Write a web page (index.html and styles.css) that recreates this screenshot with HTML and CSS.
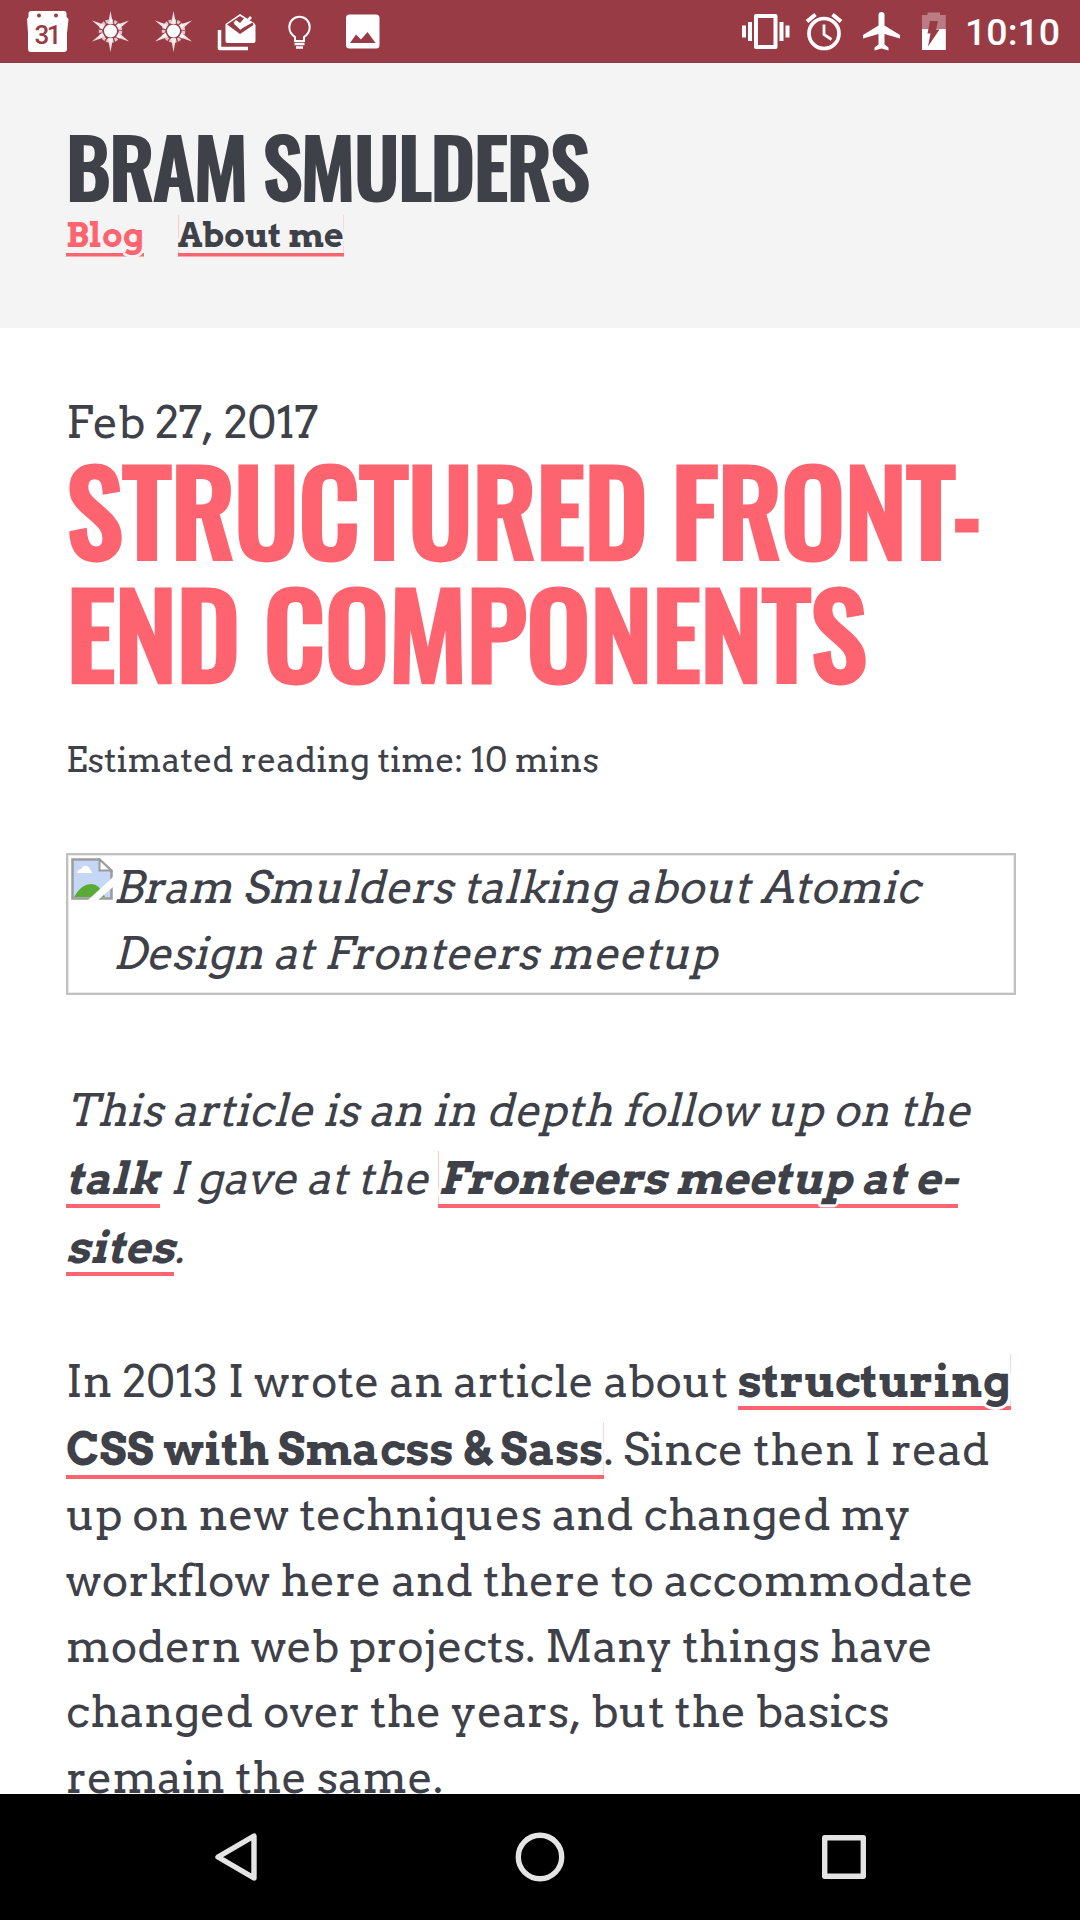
FILE: index.html
```html
<!DOCTYPE html>
<html lang="en">
<head>
<meta charset="utf-8">
<title>Structured front-end components</title>
<link rel="stylesheet" href="styles.css">
</head>
<body>
<div class="status">
  <svg class="slot" viewBox="16 0 63 63"><path fill="#fff" d="M31 11H64Q66 11 66.500 13V17L68.500 19L67 33V49Q67 52 64 52H31Q28 52 28 49V33L27 19L28.500 17V13Q29 11 31 11Z"/><circle cx="39" cy="15.500" r="2" fill="#983b45"/><circle cx="56" cy="15.500" r="2" fill="#983b45"/><text class="day" x="34.500" y="44">31</text></svg>
  <svg class="slot" viewBox="79 0 63 63"><use href="#burst"/>
    <defs><g id="burst" fill="#fff"><circle cx="110.500" cy="31" r="6.500"/><circle cx="110.500" cy="31" r="10" fill="none" stroke="#fff" stroke-width="3.500" stroke-dasharray="3 1.200" opacity=".7"/><path d="M110.500 11L113 24H108ZM110.500 52L113 38H108ZM92 20.500L105 25L102.500 29.500ZM129 20.500L116 25L118.500 29.500ZM92 41.500L105 37L102.500 32.500ZM129 41.500L116 37L118.500 32.500Z" opacity=".85"/></g></defs></svg>
  <svg class="slot" viewBox="79 0 63 63"><use href="#burst"/></svg>
  <svg class="slot" viewBox="205 0 63 63"><path fill="none" stroke="#fff" stroke-width="3.500" stroke-linejoin="round" d="M219.500 30V48.500H248"/><path fill="#fff" d="M225.500 24L240 14L254 23L255.500 25V41Q255.500 43 253.500 43H227.500Q225.500 43 225.500 41Z"/><path fill="#983b45" d="M227 24.500L240 16L244 18.500L240 23L236 20L233.500 22.500L240 29.500L252.500 22.500L253.500 25L240 34Z"/><path fill="none" stroke="#fff" stroke-width="2.600" d="M235 23L240.500 28L251 17"/></svg>
  <svg class="slot" viewBox="268 0 63 63"><g fill="none" stroke="#fff" stroke-width="2"><path d="M295 41V37Q289.300 33.500 289.300 27A10.200 10.200 0 0 1 309.700 27Q309.700 33.500 304 37V41Z"/><path d="M294.500 44H304.500" stroke-width="2.500"/><path d="M296 47.500H303" stroke-width="2.500"/></g></svg>
  <svg class="slot" viewBox="331 0 63 63"><path fill="#fff" fill-rule="evenodd" d="M349.500 14.500H376Q379.500 14.500 379.500 18V45Q379.500 48.500 376 48.500H349.500Q346 48.500 346 45V18Q346 14.500 349.500 14.500ZM350 43H375.500L367.500 32L361 39.500L356 34.500Z"/></svg>
  <div class="tray">
    <svg viewBox="737 0 57 63" width="57" height="63"><path fill="none" stroke="#fff" stroke-width="4" stroke-linejoin="round" d="M756 16H775.500V47H756Z"/><path fill="#fff" d="M742 25.500H746V37.500H742ZM748 22H752V41H748ZM779.500 22H783.500V41H779.500ZM785.500 25.500H789.500V37.500H785.500Z"/></svg>
    <svg viewBox="794 0 59 63" width="59" height="63"><g fill="none" stroke="#fff"><circle cx="824" cy="33.500" r="15" stroke-width="3.700"/><path d="M824 24.500V34.500L831.500 39.500" stroke-width="2.800"/><path d="M807 21.500L815.500 14.500M841 21.500L832.500 14.500" stroke-width="4"/></g></svg>
    <svg viewBox="853 0 57 63" width="57" height="63"><path fill="#fff" d="M900 38.500V35L884.500 25.500V15Q884.500 12 881.500 12T878.500 15V25.500L863 35V38.500L878.500 34V44.500L874.500 47.500V50.500L881.500 48.500L888.500 50.500V47.500L884.500 44.500V34Z"/></svg>
    <svg viewBox="910 0 48 63" width="48" height="63"><path fill="#bc7b82" d="M922 15H927.500V12.500H940V15H945.800V30H922Z"/><path fill="#fff" d="M922 29H945.800V50H922Z"/><path fill="#983b45" d="M930 21H938L936 29.500H939.500L928 46.500L930.500 33.500H927.500Z"/></svg>
    <span class="clock">10:10</span>
  </div>
</div>
<div class="page">
  <header class="masthead">
    <div class="logo">BRAM SMULDERS</div>
    <nav class="menu"><a class="link current">Blog</a><a class="link edge-l edge-r">About me</a></nav>
  </header>
  <main class="article">
    <p class="date">Feb 27, 2017</p>
    <h1 class="title">STRUCTURED FRONT<span class="hyphen">-</span><br>END COMPONENTS</h1>
    <p class="meta">Estimated reading time: 10 mins</p>
    <div class="broken">
      <svg class="thumb" viewBox="0 0 42 42"><path fill="#c5d7f4" stroke="#9c9c9c" stroke-width="2.500" d="M1.500 1.500H28.500L40.500 13V40.500H1.500Z"/><path fill="#fff" d="M6 15Q7 11 10.500 11Q12 7 15.500 8Q19 9 18.500 11Q21 12 21 15Z"/><path fill="#5aab35" d="M3 39Q10 26 20 26Q29 26 34 39Z"/><path fill="#fff" stroke="#9c9c9c" stroke-width="2" d="M28.500 1.500V12.500H40.500Z"/><path fill="#fff" d="M17 42L42 19V29L27 42Z"/></svg>
      <div class="alt"><div><span class="slant">Bram Smulders talking about Atomic</span></div><div><span class="slant">Design at Fronteers meetup</span></div></div>
    </div>
    <div class="copy intro">
      <div class="line"><span class="slant">This article is an in depth follow up on the</span></div>
      <div class="line linked"><a class="link"><span class="slant">talk</span></a> <span class="slant">I gave at the</span> <a class="link edge-l"><span class="slant">Fronteers meetup at e-</span></a></div>
      <div class="line linked last"><a class="link"><span class="slant">sites</span></a><span class="slant">.</span></div>
    </div>
    <div class="copy">
      <div class="line linked">In 2013 I wrote an article about <a class="link edge-r wide">structuring</a></div>
      <div class="line linked"><a class="link edge-r">CSS with Smacss &amp; Sass</a>. Since then I read</div>
      <div class="line after">up on new techniques and changed my</div>
      <div class="line">workflow here and there to accommodate</div>
      <div class="line">modern web projects. Many things have</div>
      <div class="line unkerned">changed over the years, but the basics</div>
      <div class="line">remain the same.</div>
    </div>
  </main>
</div>
<div class="navbar">
  <svg viewBox="0 0 60 60"><path d="M12 30L48 9V51Z"/></svg>
  <svg viewBox="0 0 60 60"><circle cx="30" cy="30" r="21.700"/></svg>
  <svg viewBox="0 0 60 60"><path d="M10.700 10.700H49.300V49.300H10.700Z"/></svg>
</div>
</body>
</html>
```
FILE: styles.css
```css
* { box-sizing: border-box; }
body {
  margin: 0;
  width: 1080px;
  height: 1920px;
  display: flex;
  flex-direction: column;
  overflow: hidden;
  background: #fff;
  color: #3f4149;
  font: 44.6px/65.7px Arvo, "DejaVu Serif Condensed", "DejaVu Serif", serif;
  white-space: nowrap;
}
p, h1 { margin: 0; }

.status {
  height: 63px;
  flex: none;
  display: flex;
  padding-left: 16px;
  background: #983b45;
}
.slot { width: 63px; height: 63px; }
.day { font: 500 26px Roboto, sans-serif; letter-spacing: -2.5px; fill: #983b45; }
.tray { display: flex; margin-left: auto; margin-right: 19px; }
.clock {
  width: 96px;
  margin-left: 7px;
  font: 500 37.5px/65px Roboto, sans-serif;
  color: #fff;
}

.page { flex: 1; min-height: 0; overflow: hidden; }
.masthead {
  --paper: #f4f4f4;
  height: 265px;
  padding: 62px 66px 0;
  background: var(--paper);
}
.logo {
  font: 500 80.3px/80px Oswald, "Open Sans Condensed", sans-serif;
  letter-spacing: -1.4px;
  word-spacing: -2.3px;
  -webkit-text-stroke: 1.9px;
}
.menu {
  display: flex;
  gap: 33.5px;
  margin-top: 10px;
  font-size: 34px;
}
.link {
  --rule: 4px;
  padding-bottom: 2.5px;
  font-weight: 700;
  line-height: 1;
  background:
    linear-gradient(#fd6470, #fd6470) 0 100% / 100% var(--rule) no-repeat,
    linear-gradient(var(--left, transparent), var(--left, transparent)) 0 0 / 1px 100% no-repeat,
    linear-gradient(var(--right, transparent), var(--right, transparent)) 100% 0 / 1px 100% no-repeat;
  text-shadow:
    3px 0 var(--paper), -3px 0 var(--paper), 0 3px var(--paper), 0 -3px var(--paper),
    2px 2px var(--paper), -2px 2px var(--paper), 2px -2px var(--paper), -2px -2px var(--paper);
}
.menu .link { --rule: 3.5px; line-height: 39px; }
.edge-l { --left: #fdc9ce; }
.edge-r { --right: #fdd5d9; }
.wide { letter-spacing: .15px; }
.current { color: #fd6470; }

.article { --paper: #fff; padding: 69.5px 64px 0 66px; }
.date { line-height: 48px; letter-spacing: -.2px; }
.date, .unkerned { font-kerning: none; }
.title {
  margin-top: 1px;
  font: 500 116px/123px Oswald, "Open Sans Condensed", sans-serif;
  letter-spacing: -1.4px;
  word-spacing: -3px;
  -webkit-text-stroke: 2.8px;
  color: #fd6470;
}
.hyphen {
  display: inline-block;
  margin-left: -1.5px;
  transform: scaleX(.76);
  transform-origin: 0 50%;
}
.meta { margin-top: 42.4px; font-size: 34.1px; line-height: 50px; }
.broken {
  display: flex;
  height: 142px;
  margin-top: 68px;
  border: 2px solid #c0c0c0;
  box-shadow: inset 0 0 0 1px #e9e9e9;
  line-height: 66px;
}
.thumb { width: 42px; height: 42px; margin: 3px 0 0 3px; }
.alt { margin-top: -1px; }
.slant {
  display: inline-block;
  line-height: 1;
  transform: skewX(-14deg);
  transform-origin: 0 85%;
}
.copy { margin-top: 65.6px; }
.copy.intro { margin-top: 83px; }
.linked { padding-top: 2.6px; }
.linked.last { padding-top: 3px; }
.after { margin-top: -.5px; }

.navbar {
  height: 126px;
  flex: none;
  display: flex;
  justify-content: center;
  align-items: center;
  gap: 244px;
  background: #000;
}
.navbar svg {
  width: 60px;
  height: 60px;
  fill: none;
  stroke: #e4e4e4;
  stroke-width: 5.4px;
  stroke-linejoin: round;
}
```
